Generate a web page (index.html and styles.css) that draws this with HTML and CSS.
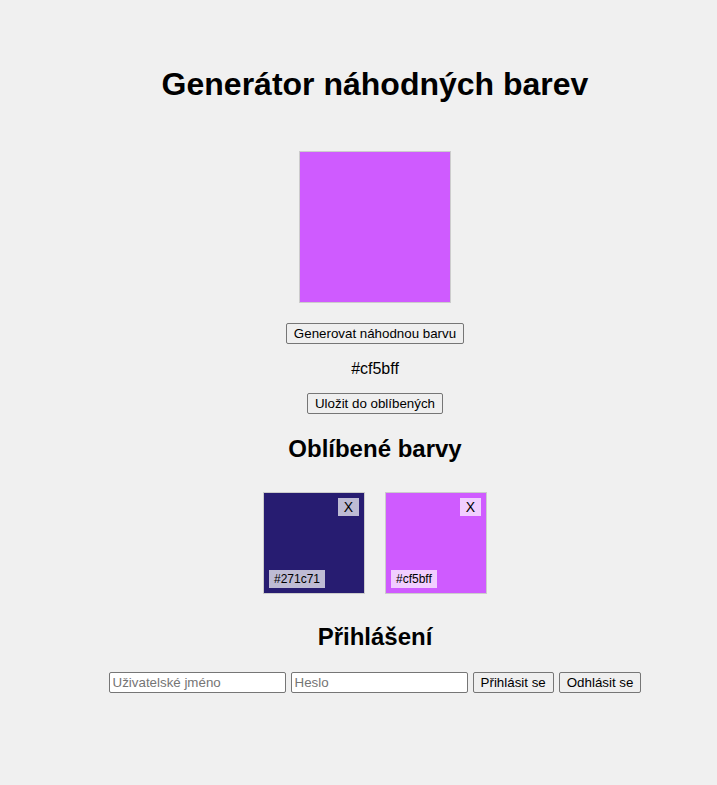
FILE: index.html
```html
<!DOCTYPE html>
<html lang="cs">
<head>
<meta charset="utf-8">
<title>Generátor náhodných barev</title>
<link rel="stylesheet" href="styles.css">
</head>
<body>
<main class="page">
  <h1 class="title">Generátor náhodných barev</h1>
  <div class="swatch" style="background-color:#cf5bff"></div>
  <div class="row"><button class="btn">Generovat náhodnou barvu</button></div>
  <p class="hex">#cf5bff</p>
  <div class="row"><button class="btn">Uložit do oblíbených</button></div>
  <h2 class="subtitle">Oblíbené barvy</h2>
  <div class="favorites">
    <div class="fav" style="background-color:#271c71">
      <button class="fav-x">X</button>
      <span class="fav-label">#271c71</span>
    </div>
    <div class="fav" style="background-color:#cf5bff">
      <button class="fav-x">X</button>
      <span class="fav-label">#cf5bff</span>
    </div>
  </div>
  <h2 class="subtitle login-title">Přihlášení</h2>
  <div class="login">
    <input class="field" type="text" placeholder="Uživatelské jméno">
    <input class="field" type="password" placeholder="Heslo">
    <button class="btn">Přihlásit se</button>
    <button class="btn">Odhlásit se</button>
  </div>
</main>
</body>
</html>
```
FILE: styles.css
```css
html, body {
  margin: 0;
  padding: 0;
  background: #f0f0f0;
}
body {
  font-family: "Liberation Sans", Arial, sans-serif;
  color: #000;
}
.page {
  padding: 45px 0 0 33px;
  text-align: center;
}
.title {
  font-size: 32px;
  line-height: 37px;
  font-weight: bold;
  margin: 21px 0 0;
}
.swatch {
  width: 150px;
  height: 150px;
  border: 1px solid #ccc;
  margin: 48px auto 0;
}
.row {
  margin-top: 20px;
  line-height: 0;
}
.btn {
  font-family: "Liberation Sans", Arial, sans-serif;
  font-size: 13.33px;
  line-height: 15px;
  padding: 1px 7px;
  background: #efefef;
  border: 1px solid #767676;
  border-radius: 2px;
  color: #000;
  height: 21px;
  box-sizing: border-box;
}
.hex {
  font-size: 16px;
  line-height: 18px;
  margin: 16px 0 0;
}
.hex + .row {
  margin-top: 15px;
}
.subtitle {
  font-size: 24px;
  line-height: 28px;
  font-weight: bold;
  margin: 21px 0 0;
}
.favorites {
  display: flex;
  justify-content: center;
  gap: 20px;
  margin-top: 29px;
}
.fav {
  position: relative;
  width: 100px;
  height: 100px;
  border: 1px solid #ccc;
}
.fav-x {
  position: absolute;
  top: 5px;
  right: 5px;
  width: 21px;
  height: 18px;
  padding: 0;
  border: none;
  border-radius: 0;
  background: rgba(255,255,255,0.7);
  font-family: "Liberation Sans", Arial, sans-serif;
  font-size: 14px;
  line-height: 18px;
  color: #000;
}
.fav-label {
  position: absolute;
  left: 5px;
  bottom: 5px;
  padding: 0 5px;
  background: rgba(255,255,255,0.7);
  font-size: 12px;
  line-height: 18px;
}
.login-title {
  margin-top: 29px;
}
.login {
  margin-top: 21px;
  display: flex;
  justify-content: center;
  gap: 5px;
}
.field {
  font-family: "Liberation Sans", Arial, sans-serif;
  font-size: 13.33px;
  width: 177px;
  height: 21px;
  box-sizing: border-box;
  padding: 1px 3px;
  border: 1px solid #767676;
  border-radius: 2px;
  background: #fff;
  margin: 0;
}
.field::placeholder {
  color: #757575;
}
.login .btn {
  margin: 0;
}
```
